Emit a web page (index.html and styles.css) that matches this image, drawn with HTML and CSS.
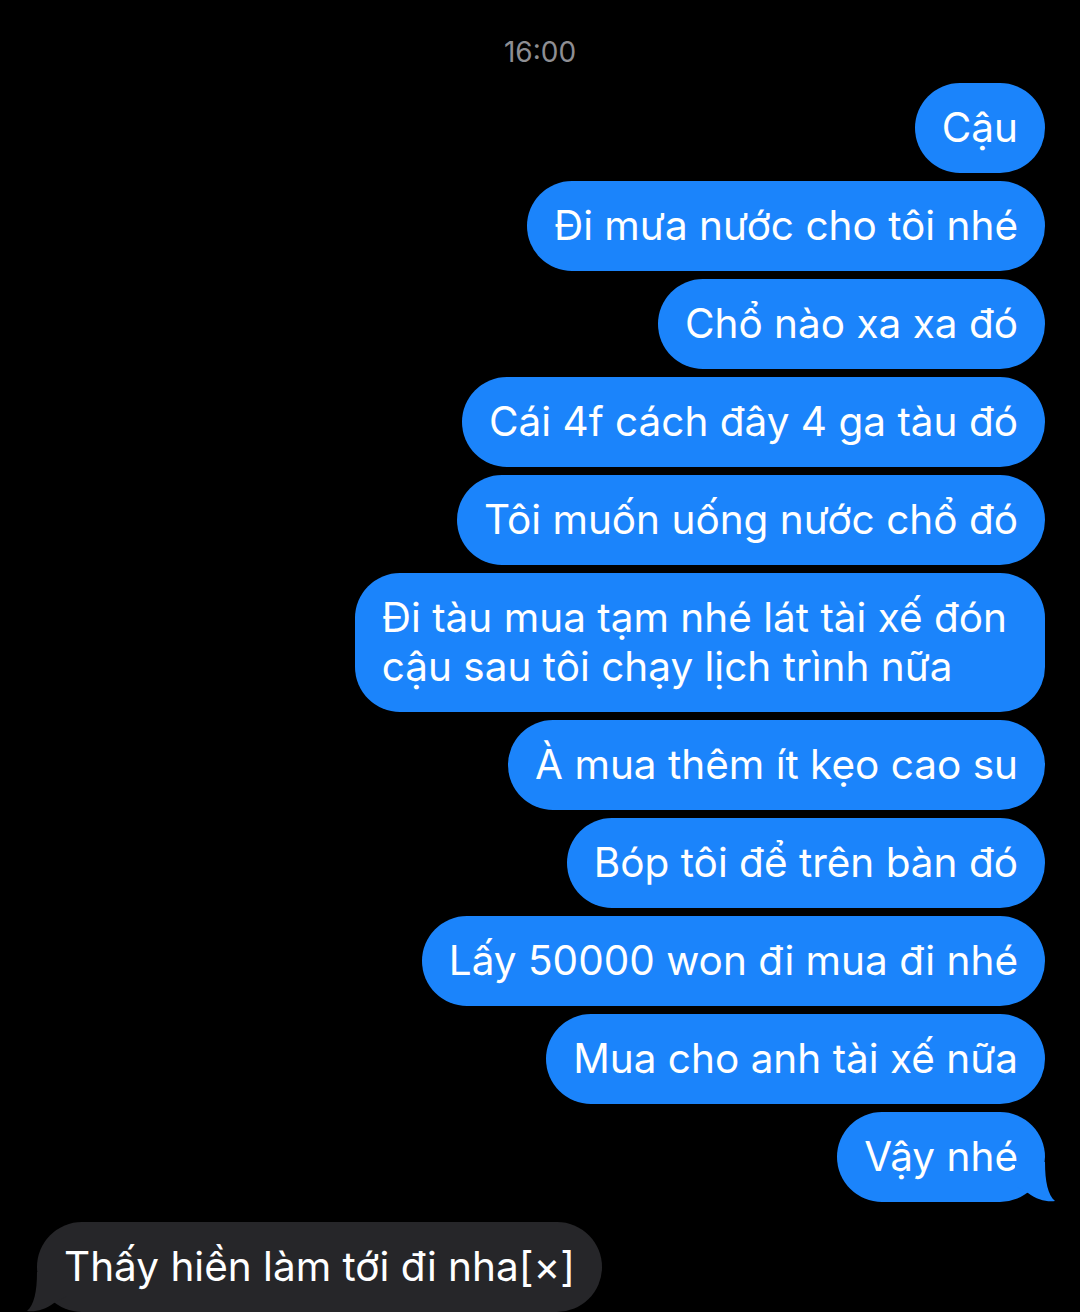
FILE: index.html
```html
<!DOCTYPE html>
<html lang="vi">
<head>
  <meta charset="UTF-8" />
  <title>Tin nhắn</title>
  <link rel="stylesheet" href="styles.css">
</head>
<body>
  <div class="chat">
    <div class="time">16:00</div>

    <div class="thread">
      <div class="bubble sent">Cậu</div>
      <div class="bubble sent">Đi mưa nước cho tôi nhé</div>
      <div class="bubble sent">Chổ nào xa xa đó</div>
      <div class="bubble sent">Cái 4f cách đây 4 ga tàu đó</div>
      <div class="bubble sent">Tôi muốn uống nước chổ đó</div>
      <div class="bubble sent wrapped">Đi tàu mua tạm nhé lát tài xế đón<br>cậu sau tôi chạy lịch trình nữa</div>
      <div class="bubble sent">À mua thêm ít kẹo cao su</div>
      <div class="bubble sent">Bóp tôi để trên bàn đó</div>
      <div class="bubble sent">Lấy 50000 won đi mua đi nhé</div>
      <div class="bubble sent">Mua cho anh tài xế nữa</div>
      <div class="bubble sent">Vậy nhé
        <svg class="tail" viewBox="0 0 40 40" width="40" height="40"><path d="M30 0 C30 20 33 33 40 39 C32 40 22 38 13 31 L0 24 L0 0 Z"/></svg>
      </div>

      <div class="bubble received">Thấy hiền làm tới đi nha[×]
        <svg class="tail" viewBox="0 0 40 40" width="40" height="40"><path d="M30 0 C30 20 33 33 40 39 C32 40 22 38 13 31 L0 24 L0 0 Z"/></svg>
      </div>
    </div>
  </div>
</body>
</html>
```

FILE: styles.css
```css
:root {
  --blue: #1b84fb;
  --grey: #262629;
  --bg: #000;
  --muted: #8e8e93;
}
* {
  box-sizing: border-box;
}
html, body {
  margin: 0;
  padding: 0;
  background: var(--bg);
}
body {
  font-family: 'Inter', 'Roboto', sans-serif;
  color: #fff;
  height: 1312px;
  overflow: hidden;
}
.chat {
  padding-top: 35px;
}
.time {
  text-align: center;
  color: var(--muted);
  font-size: 28px;
  line-height: 34px;
  height: 48px;
}
.thread {
  display: flex;
  flex-direction: column;
  align-items: flex-end;
  gap: 8px;
  padding: 0 35px 0 37px;
}
.bubble {
  position: relative;
  font-size: 40.5px;
  line-height: 49px;
  padding: 20px 27px 21px 27px;
  border-radius: 45px;
  white-space: nowrap;
}
.bubble.wrapped {
  padding-right: 38px;
}
.sent {
  background: var(--blue);
}
.received {
  background: var(--grey);
  align-self: flex-start;
  margin-top: 12px;
}

/* tails */
.tail {
  position: absolute;
  bottom: 0;
  display: block;
}
.sent .tail {
  right: -10px;
  fill: var(--blue);
}
.received .tail {
  left: -10px;
  fill: var(--grey);
  transform: scaleX(-1);
}
```
